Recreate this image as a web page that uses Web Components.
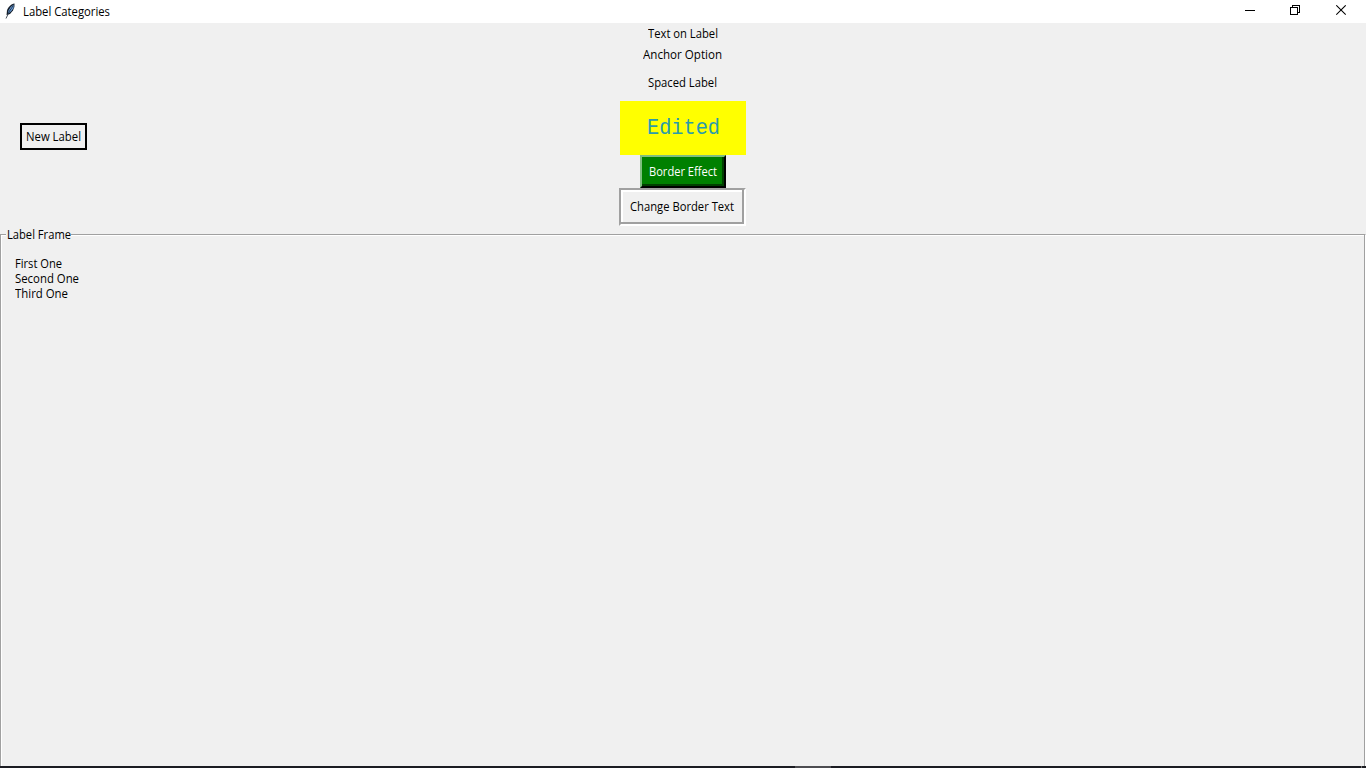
<!DOCTYPE html>
<html lang="en">
<head>
<meta charset="utf-8">
<title>Label Categories</title>
<style>
html,body{margin:0;height:100%;overflow:hidden}
body{font:12px/15px "Open Sans","Noto Sans",sans-serif;color:#000;background:#f0f0f0}
</style>
</head>
<body>
<tk-window></tk-window>
<script>
// A line of text fitted to a given advance width.
class TkText extends HTMLElement{
  constructor(){super();this.attachShadow({mode:'open'}).innerHTML=`<style>:host{display:inline-block;white-space:nowrap;height:15px;line-height:15px}span{display:inline-block;transform-origin:0 50%}</style><span><slot></slot></span>`}
  connectedCallback(){
    const w=+this.getAttribute('w'),s=this.shadowRoot.querySelector('span');
    const n=s.getBoundingClientRect().width;
    this.style.width=w+'px';
    s.style.transform=`scaleX(${w/n})`;
  }
}
class TkTitlebar extends HTMLElement{
  constructor(){super();this.attachShadow({mode:'open'}).innerHTML=`<style>
:host{display:flex;height:23px;background:#fff;box-sizing:border-box;padding:0 19px 0 4px;flex:none}
.t{padding:4px 0 0 7px;flex:1}.c{display:flex;gap:35px;padding-top:5px}svg{display:block}.f{margin-top:3px}.x{margin-left:1px}
</style><svg class="f" width="12" height="16" viewBox="0 0 12 16"><path d="M10.500.5C7 1 4 4 3 7.500L2.500 12 6 11 9 7.500Q11 4 10.500.500Z" fill="#16202c"/><path d="M9.800 1.500Q6 3.500 4.300 8L4 11Q7.500 8.500 9.500 5Z" fill="#6a9fdd"/><path d="M9.300 2.500 5.500 8 2 15.500" fill="none" stroke="#172334" stroke-width=".8"/></svg>
<div class="t"><slot></slot></div>
<div class="c">
<svg width="10" height="10" shape-rendering="crispEdges"><path d="M0 5.500H10" stroke="#000"/></svg>
<svg width="10" height="10" shape-rendering="crispEdges" fill="none" stroke="#000"><path d="M.5 2.500H7.500V9.500H.5ZM2.500 2.500V.5H9.500V7.500H7.500"/></svg>
<svg class="x" width="11" height="11" fill="none" stroke="#000" stroke-width="1.050"><path d="M.3.3 9.700 9.700M9.700.3.3 9.700"/></svg>
</div>`}
}
class TkLabel extends HTMLElement{
  constructor(){super();this.attachShadow({mode:'open'}).innerHTML=`<style>
:host{display:flex;align-items:center;justify-content:center;box-sizing:border-box;height:21px}
:host([kind=anchor]){padding-right:2px}
:host([kind=spaced]){height:35px;padding-right:1px}
:host([kind=edited]){width:126px;height:54px;margin-top:1px;padding:1px 0 0 1px;background:#ff0;color:#2b9bab;font:22px "Liberation Mono",monospace}
:host([kind=raised]){width:86px;height:33px;background:#008000;color:#fff;border:2px solid;border-color:#80bf80 #000 #000 #80bf80;box-shadow:inset -2px -2px #004000}
:host([kind=groove]){width:127px;height:38px;border:2px solid;border-color:#a0a0a0 #fff #fff #a0a0a0;box-shadow:inset -2px -2px #a0a0a0,inset 2px 2px #fff;padding:0 1px 1px 0}
:host([kind=solid]){width:67px;height:27px;border:2px solid #000}
</style><slot></slot>`}
}
class TkLabelframe extends HTMLElement{
  constructor(){super();this.attachShadow({mode:'open'}).innerHTML=`<style>
:host{display:flex;flex-direction:column;flex:1;box-sizing:border-box;border:1px solid #a0a0a0;border-right-color:#fff;border-bottom:0;box-shadow:inset 1px 1px #fff}
.b{flex:1;display:flex;flex-direction:column;border-right:1px solid #a0a0a0;padding-left:5px}
.h{background:#f0f0f0;align-self:flex-start;margin-top:-8px;padding:0 0 0 1px;height:15px}
.items{display:flex;flex-direction:column;padding:14px 0 0 9px}
</style><div class="b"><div class="h"><slot name="title"></slot></div><div class="items"><slot></slot></div></div>`}
}
class TkTaskbar extends HTMLElement{
  constructor(){super();this.attachShadow({mode:'open'}).innerHTML=`<style>:host{display:flex;height:2px;background:#1b1c22;flex:none}i{width:36px;margin-left:795px;background:#4d4d51}b{width:1px;margin-left:530px;background:#777}</style><i></i><b></b>`}
}
class TkWindow extends HTMLElement{
  constructor(){super();this.attachShadow({mode:'open'}).innerHTML=`<style>
:host{display:flex;flex-direction:column;width:1366px;height:768px;background:#f0f0f0}
.top{display:grid;grid-template-columns:619px 128px 1fr;height:211px;flex:none}
.left{padding:100px 0 0 20px}
.mid{display:flex;flex-direction:column;align-items:center}
.groove{align-self:flex-start}
</style>
<tk-titlebar><tk-text w="87">Label Categories</tk-text></tk-titlebar>
<div class="top"><div class="left"><tk-label kind="solid"><tk-text w="55">New Label</tk-text></tk-label></div>
<div class="mid">
<tk-label><tk-text w="70">Text on Label</tk-text></tk-label>
<tk-label kind="anchor"><tk-text w="79">Anchor Option</tk-text></tk-label>
<tk-label kind="spaced"><tk-text w="69">Spaced Label</tk-text></tk-label>
<tk-label kind="edited"><tk-text w="73">Edited</tk-text></tk-label>
<tk-label kind="raised"><tk-text w="68">Border Effect</tk-text></tk-label>
<tk-label kind="groove" class="groove"><tk-text w="104">Change Border Text</tk-text></tk-label>
</div></div>
<tk-labelframe><tk-text slot="title" w="64">Label Frame</tk-text>
<tk-text w="47">First One</tk-text><tk-text w="64">Second One</tk-text><tk-text w="53">Third One</tk-text></tk-labelframe>
<tk-taskbar></tk-taskbar>`}
}
customElements.define('tk-titlebar',TkTitlebar);
customElements.define('tk-label',TkLabel);
customElements.define('tk-labelframe',TkLabelframe);
customElements.define('tk-taskbar',TkTaskbar);
customElements.define('tk-window',TkWindow);
customElements.define('tk-text',TkText);
</script>
</body>
</html>
